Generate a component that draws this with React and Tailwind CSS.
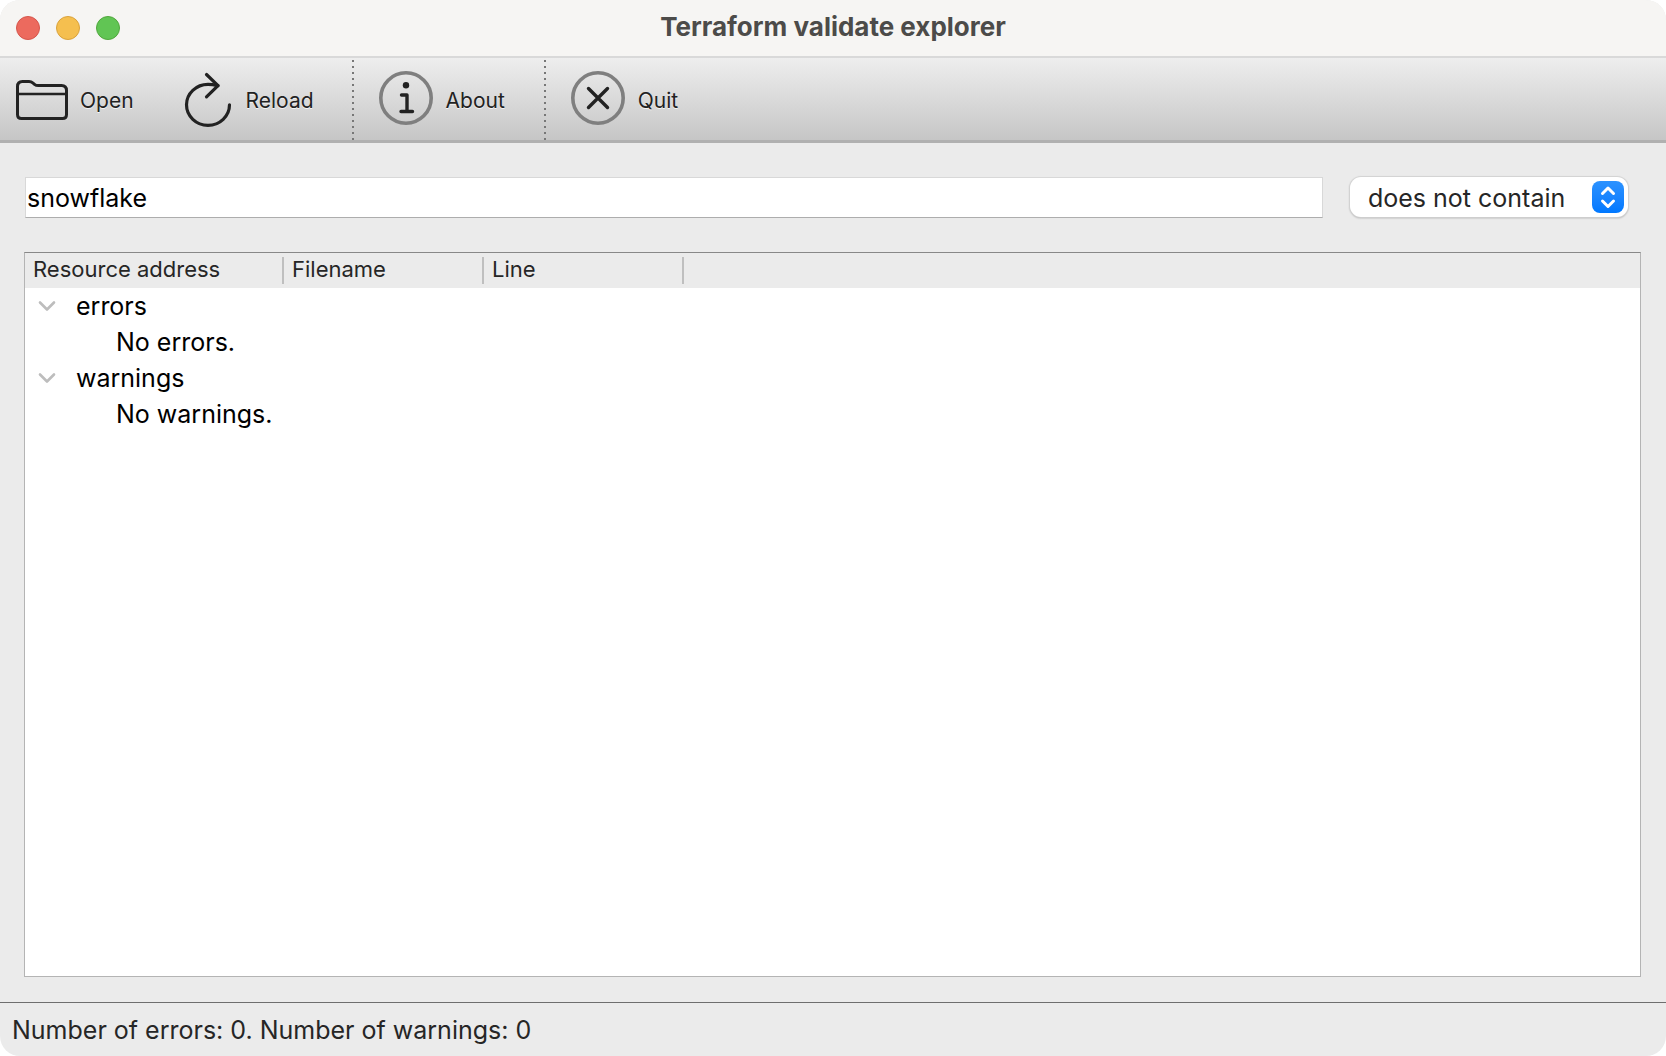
import React, { useState } from "react";

function FolderIcon() {
  return (
    <svg viewBox="0 0 56 56" className="size-14" fill="none" stroke="#222" strokeWidth="3" strokeLinejoin="round">
      <path d="M3.500 44.500V16.500q0-5 5-5H15q2.200 0 3.800 1.400l1.700 1.400q1.500 1.200 3.800 1.200H47.500q5 0 5 5V44.500q0 4-4 4H7.500q-4 0-4-4Z" />
      <path d="M3.500 24h49" strokeWidth="2.400" />
    </svg>
  );
}

function ReloadIcon() {
  return (
    <svg viewBox="0 0 56 56" className="size-14 overflow-visible" fill="none" stroke="#222" strokeWidth="3.200" strokeLinecap="round" strokeLinejoin="round">
      <path d="M49.500 34.800A21.500 20.500 0 1 1 28 14.300Q32 14.300 38 15.600" />
      <path d="M26.500 4.500L38 15.600L26.500 26.800" />
    </svg>
  );
}

function InfoIcon() {
  return (
    <svg viewBox="0 0 56 56" className="size-14" fill="none">
      <circle cx="28" cy="28" r="25.200" stroke="#7f7f7f" strokeWidth="3.600" />
      <circle cx="28" cy="15.300" r="3.200" fill="#222" />
      <path d="M23.500 25h5.500v16.500M23 41.500h11.500" stroke="#222" strokeWidth="3.400" strokeLinecap="round" strokeLinejoin="round" />
    </svg>
  );
}

function QuitIcon() {
  return (
    <svg viewBox="0 0 56 56" className="size-14" fill="none">
      <circle cx="28" cy="28" r="25.200" stroke="#7f7f7f" strokeWidth="3.600" />
      <path d="M18.500 18.500l19 19M37.500 18.500l-19 19" stroke="#222" strokeWidth="3.400" strokeLinecap="round" />
    </svg>
  );
}

function ToolButton({ icon, label, gap = "gap-3" }) {
  return (
    <button type="button" className={`flex h-full items-center pr-[22px] pb-[3px] pl-6 text-[21px] leading-6 text-[#222] ${gap}`}>
      {icon}
      <span className="pt-[7px] [text-shadow:0_1px_0_#f4f4f4]">{label}</span>
    </button>
  );
}

function Separator() {
  return (
    <div className="mt-0.5 w-0.5 self-stretch bg-[repeating-linear-gradient(to_bottom,#777_0_2px,transparent_2px_6px)]" />
  );
}

function Chevron() {
  return (
    <svg viewBox="0 0 18 12" className="h-3 w-[18px]" fill="none" stroke="#bdbdbd" strokeWidth="2.600" strokeLinecap="round" strokeLinejoin="round">
      <path d="M2 2.500l7 7l7-7" />
    </svg>
  );
}

function Group({ name, message }) {
  const [open, setOpen] = useState(true);
  return (
    <>
      <tr className="h-9">
        <td colSpan="4" className="p-0">
          <button type="button" aria-expanded={open} onClick={() => setOpen(!open)} className="flex h-9 items-center gap-5 pl-[13px]">
            <Chevron />
            <span>{name}</span>
          </button>
        </td>
      </tr>
      {open && (
        <tr className="h-9">
          <td colSpan="4" className="p-0 pl-[91px]">{message}</td>
        </tr>
      )}
    </>
  );
}

function HeaderCell({ children }) {
  return (
    <th className="p-0 py-1 font-normal">
      <div className="h-[27px] border-r-2 border-[#bfbfbf] pl-2 text-left leading-6">{children}</div>
    </th>
  );
}

export default function App() {
  const [query, setQuery] = useState("snowflake");
  return (
    <div className="flex min-h-screen flex-col overflow-hidden rounded-[20px] bg-[#ebebeb] font-['Inter',sans-serif] text-[25px] leading-9 text-black">
      <header className="grid h-[58px] grid-cols-[1fr_auto_1fr] items-center border-b-2 border-[#d9d9d9] bg-[#f6f5f3]">
        <div className="flex gap-4 pl-4">
          <button type="button" aria-label="Close" className="size-6 rounded-full border border-[#d5564c] bg-[#ec6a5e]" />
          <button type="button" aria-label="Minimize" className="size-6 rounded-full border border-[#d9a23c] bg-[#f5bf4f]" />
          <button type="button" aria-label="Zoom" className="size-6 rounded-full border border-[#51a73d] bg-[#61c554]" />
        </div>
        <h1 className="pb-0.5 text-[26px] leading-8 font-bold text-[#4c4b49]">Terraform validate explorer</h1>
      </header>

      <nav className="flex h-[85px] items-center border-b-[3px] border-[#b0b0b0] bg-linear-to-b from-[#eeeeee] to-[#c6c6c6]">
        <div className="-ml-2.5 flex h-full pr-4">
          <ToolButton icon={<FolderIcon />} label="Open" gap="gap-2.5" />
          <ToolButton icon={<ReloadIcon />} label="Reload" gap="gap-2.5" />
        </div>
        <Separator />
        <div className="h-full pr-[17px]">
          <ToolButton icon={<InfoIcon />} label="About" />
        </div>
        <Separator />
        <ToolButton icon={<QuitIcon />} label="Quit" />
      </nav>

      <main className="flex flex-1 flex-col gap-[34px] pt-[34px] pr-[25px] pb-[25px] pl-6">
        <div className="flex items-start gap-[27px] pr-[13px]">
          <input
            type="text"
            aria-label="Filter text"
            value={query}
            onChange={(e) => setQuery(e.target.value)}
            className="ml-px h-[41px] min-w-0 flex-1 border border-[#d8d8d8] border-b-[#adadad] bg-white px-px outline-none"
          />
          <div className="relative h-10">
            <select
              aria-label="Filter mode"
              defaultValue="does not contain"
              className="block h-10 w-[278px] appearance-none rounded-[11px] bg-white pt-px pl-[18px] text-[#262626] shadow-[0_0_1px_1px_#d2d2d2,0_1px_2px_#999]"
            >
              <option>does not contain</option>
              <option>contains</option>
            </select>
            <span className="pointer-events-none absolute top-1 right-1 flex size-8 items-center justify-center rounded-lg bg-linear-to-b from-[#2b92ff] to-[#0078ff]">
              <svg viewBox="0 0 32 32" className="size-8" fill="none" stroke="white" strokeWidth="3" strokeLinecap="round" strokeLinejoin="round">
                <path d="M10.500 12.500l5.500-5.500l5.500 5.500M10.500 20l5.500 5.500l5.500-5.500" />
              </svg>
            </span>
          </div>
        </div>

        <div className="flex-1 border border-[#b4b4b4] border-t-[#888] bg-white">
          <table className="w-full table-fixed border-collapse">
            <colgroup>
              <col className="w-[259px]" />
              <col className="w-[200px]" />
              <col className="w-[200px]" />
              <col />
            </colgroup>
            <thead className="bg-[#ebebeb] text-[22px] text-[#262626]">
              <tr>
                <HeaderCell>Resource address</HeaderCell>
                <HeaderCell>Filename</HeaderCell>
                <HeaderCell>Line</HeaderCell>
                <td />
              </tr>
            </thead>
            <tbody>
              <Group name="errors" message="No errors." />
              <Group name="warnings" message="No warnings." />
            </tbody>
          </table>
        </div>
      </main>

      <footer className="h-[54px] border-t border-[#6e6e6e] px-3 pt-[9px] text-[#262626]">
        Number of errors: 0. Number of warnings: 0
      </footer>
    </div>
  );
}
